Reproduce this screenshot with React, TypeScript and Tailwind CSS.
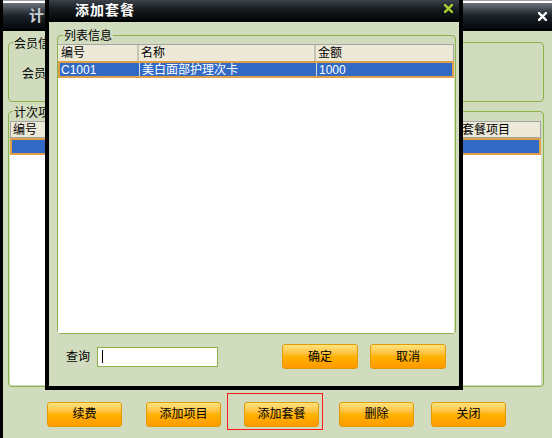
import React from 'react'

const font = "font-['Liberation_Sans','Noto_Sans_CJK_SC',sans-serif]"

function OrangeButton({ label, wide }: { label: string; wide?: boolean }) {
  return (
    <button
      className={`${wide ? 'w-[76px]' : 'w-[75px]'} h-[25px] shrink-0 rounded-[3px] border border-[#e59a00] bg-linear-to-b from-[#ffe47e] via-[#ffb300] to-[#ff9a00] text-[12px] leading-none text-black`}
    >
      {label}
    </button>
  )
}

function CloseX({ color }: { color: string }) {
  return (
    <svg width="9" height="9" viewBox="0 0 9 9" className="shrink-0">
      <path d="M1 1 L8 8 M8 1 L1 8" stroke={color} strokeWidth="2.4" strokeLinecap="square" />
    </svg>
  )
}

export default function App() {
  return (
    <div className={`relative w-[552px] h-[438px] overflow-hidden bg-[#d1dcbf] ${font}`}>
      {/* back window */}
      <div className="flex flex-col h-full border-l-[3px] border-black">
        <div className="h-[3px] border-t border-[#9aa0a6] bg-white" />
        <div className="h-[28px] flex items-center justify-between pl-[26px] pr-[5px] bg-linear-to-b from-[#6c737b] via-[#1b2127] to-[#04080b] border-b-[2px] border-black">
          <span className="text-[15px] font-bold text-[#c9cdd1] tracking-[2px]">计次</span>
          <CloseX color="#ffffff" />
        </div>

        <div className="flex-1 flex flex-col px-[5px]">
          {/* 会员信息 */}
          <div className="relative mt-[11px] h-[60px] w-[536px] border border-[#8db24a] rounded-[4px]">
            <span className="absolute -top-[5px] left-[4px] px-[1px] bg-[#d1dcbf] text-[12px] leading-[12px] text-black">会员信</span>
            <div className="pl-[13px] pt-[25px] text-[12px] leading-[12px] text-black">会员</div>
          </div>

          {/* 计次项目 */}
          <div className="relative mt-[9px] h-[276px] w-[536px] border border-[#8db24a] rounded-[4px] flex flex-col pt-[9px] pl-[1px] pr-[2px] pb-[1px]">
            <span className="absolute -top-[5px] left-[4px] px-[1px] bg-[#d1dcbf] text-[12px] leading-[12px] text-black">计次项</span>
            <div className="flex-1 flex flex-col bg-white">
              <div className="h-[17px] flex items-center border border-[#a5a5a5] bg-[#ece9d8] text-[12px] text-black">
                <span className="w-[448px] pl-[2px]">编号</span>
                <span className="pl-[3px]">套餐项目</span>
              </div>
              <div className="h-[17px] bg-[#316ac5] border-[2px] border-[#df9f48]" />
            </div>
          </div>

          {/* buttons */}
          <div className="flex items-start mt-[6px] pl-[39px]">
            <div className="mt-[8px]"><OrangeButton label="续费" /></div>
            <div className="mt-[8px] ml-[24px]"><OrangeButton label="添加项目" /></div>
            <div className="ml-[6px] border border-[#ff1a1a] pt-[7px] pb-[2px] pl-[16px] pr-[3px]">
              <OrangeButton label="添加套餐" />
            </div>
            <div className="mt-[8px] ml-[16px]"><OrangeButton label="删除" /></div>
            <div className="mt-[8px] ml-[17px]"><OrangeButton label="关闭" /></div>
          </div>
        </div>
      </div>

      {/* dialog */}
      <div className="absolute left-[45px] top-0 w-[418px] h-[390px] bg-black flex flex-col px-[4px] pb-[4px]">
        <div className="h-[20px] flex items-center justify-between pl-[26px] pr-[6px] bg-linear-to-b from-[#3b4249] via-[#151a1f] to-[#05080a]">
          <span className="text-[14px] font-bold text-white tracking-[1px]">添加套餐</span>
          <div className="-mt-[4px]"><CloseX color="#a9d132" /></div>
        </div>
        <div className="h-[2px]" />
        <div className="flex-1 bg-[#d1dcbf] flex flex-col">
          <div className="relative mt-[13px] ml-[8px] w-[399px] h-[299px] border border-[#8db24a] rounded-[4px] flex flex-col pt-[8px] pr-[1px]">
            <span className="absolute -top-[6px] left-[5px] px-[1px] bg-[#d1dcbf] text-[12px] leading-[12px] text-black">列表信息</span>
            <div className="flex-1 flex flex-col bg-white">
              <div className="h-[17px] flex items-center border-t border-r border-[#a5a5a5] bg-[#ece9d8] text-[12px] text-black">
                <span className="w-[81px] h-full flex items-center pl-[3px] border-r-[2px] border-r-[#c7c4b4]">编号</span>
                <span className="w-[177px] h-full flex items-center pl-[2px] border-r-[2px] border-r-[#c7c4b4]">名称</span>
                <span className="pl-[2px]">金额</span>
              </div>
              <div className="h-[17px] flex items-center bg-[#316ac5] border-[2px] border-[#df9f48] text-[12px] text-white">
                <span className="w-[80px] h-full flex items-center pl-[1px] border-r border-[#d8dce6]">C1001</span>
                <span className="w-[177px] h-full flex items-center pl-[2px] border-r border-[#d8dce6]">美白面部护理次卡</span>
                <span className="pl-[2px]">1000</span>
              </div>
            </div>
          </div>

          <div className="flex items-center mt-[10px] h-[25px] pl-[17px]">
            <span className="text-[12px] text-black">查询</span>
            <div className="ml-[7px] w-[121px] h-[20px] border border-[#8db24a] bg-white flex items-center pl-[4px]">
              <div className="w-[1px] h-[13px] bg-black" />
            </div>
            <div className="ml-[64px]"><OrangeButton label="确定" wide /></div>
            <div className="ml-[12px]"><OrangeButton label="取消" wide /></div>
          </div>
        </div>
      </div>
    </div>
  )
}
